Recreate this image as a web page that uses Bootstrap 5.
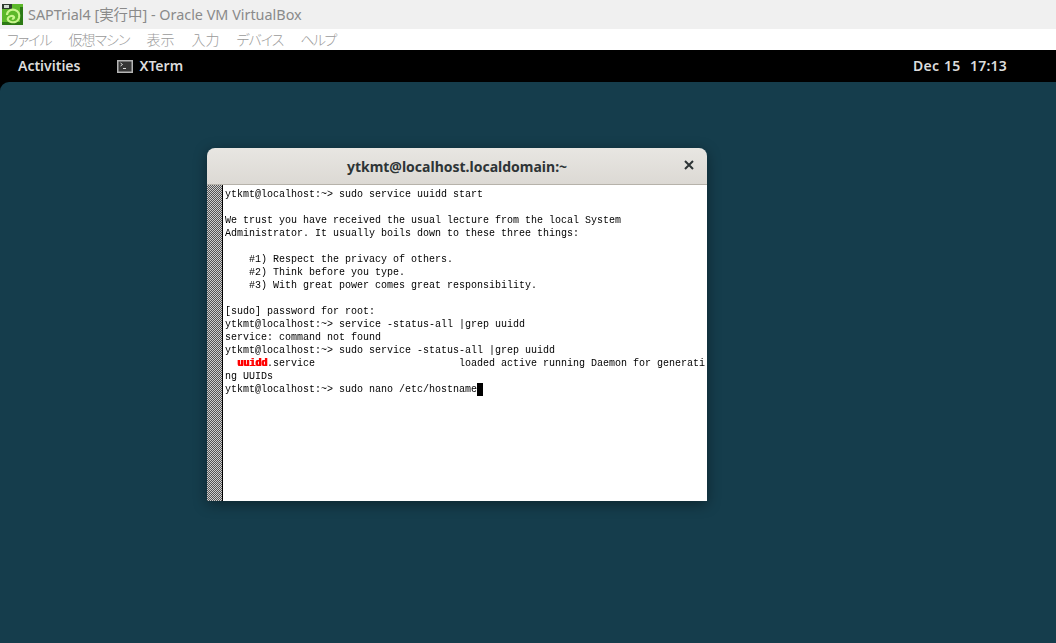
<!doctype html>
<html lang="ja"><head><meta charset="utf-8"><title>VirtualBox</title>
<link href="https://cdn.jsdelivr.net/npm/bootstrap@5.3.0/dist/css/bootstrap.min.css" rel="stylesheet">
<style>
html,body{height:643px;overflow:hidden;background:#000}
.vb-title{height:29px;background:#f0f0f0;color:#8a8a8a;font:14.4px/29px "Noto Sans","Noto Sans CJK JP",sans-serif;padding-left:2px;gap:5px}
.vb-menu{height:21px;background:#fff;color:#9a9a9a;font:300 14px/21px "Noto Sans CJK JP",sans-serif;font-feature-settings:"palt";padding-left:7px;gap:17px}
.vb-kana{letter-spacing:-1px}
.vb-kana-tight{letter-spacing:-1.6px}
.gn-bar{height:32px;background:#000;color:#dcdcdc;font:600 14px/30px "Noto Sans",sans-serif;padding:0 49px 0 18px}
.gn-app{margin-left:37px;gap:6px}
.gn-clock{letter-spacing:.2px;word-spacing:1px}
.desk{position:relative;height:561px;background:#153d4c;border-radius:9px 0 0 0;flex:none}
.desk-wrap{background:#000}
.term-win{position:absolute;left:207px;top:66px;width:500px;height:353px;border-radius:8px 8px 0 0;box-shadow:0 3px 14px rgba(0,0,0,.4);overflow:hidden}
.term-head{height:37px;flex:none;background:linear-gradient(#e8e6e2,#dcd9d4);border-bottom:1px solid #b6b2aa;position:relative;color:#2e3436;font:700 14px/37px "Noto Sans",sans-serif;text-align:center}
.term-close{position:absolute;right:13px;top:12px;display:block}
.term-body{flex:1;min-height:0;background:#fff}
.term-scroll{width:16px;flex:none;border-right:1px solid #000;background-color:#cfcfcf;background-image:conic-gradient(#555 25%,transparent 0 50%,#555 0 75%,transparent 0);background-size:2px 2px}
.term-text{padding:3px 0 0 2px;overflow:hidden;color:#000;font:10px/13px "Liberation Mono",monospace;flex:1;will-change:transform}
.term-line{height:13px;white-space:pre}
.term-hit{color:#f00;font-weight:700;text-shadow:1px 0 #f00}
.term-cur{display:inline-block;width:6px;height:13px;background:#000;vertical-align:top}
</style></head>
<body>
<div class="d-flex align-items-center vb-title">
<svg width="21" height="21" viewBox="0 0 21 21" aria-hidden="true"><rect width="21" height="21" fill="#5cb82a"/><rect x="18" y="3" width="3" height="18" fill="#2d7a14"/><rect y="18" width="21" height="3" fill="#2d7a14"/><rect width="10" height="5" fill="#2c3a2c"/><rect x="2" y="1" width="5" height="3" fill="#cfd8cf"/><path d="M5 11c0-4 4-6 8-5 3 1 5 4 4 8-1 3-4 5-8 4-2-.5-4-2-3-4 1-2 5-3 6-1 .5 1-1 2-2 1.500" fill="none" stroke="#c8f58c" stroke-width="2.200"/></svg>
<span>SAPTrial4 [実行中] - Oracle VM VirtualBox</span></div>
<div class="d-flex vb-menu"><span class="vb-kana">ファイル</span><span class="vb-kana">仮想マシン</span><span>表示</span><span>入力</span><span class="vb-kana">デバイス</span><span class="vb-kana-tight">ヘルプ</span></div>
<div class="d-flex align-items-center gn-bar">
<span>Activities</span>
<span class="d-flex align-items-center gn-app"><svg width="16" height="13" viewBox="0 0 16 13" aria-hidden="true"><rect x=".75" y=".75" width="14.500" height="11.500" fill="#363636" stroke="#b5b5b5" stroke-width="1.500"/><path d="M3.500 3l2 1.500-2 1.500" fill="none" stroke="#ddd"/><path d="M6 8.500h3" stroke="#ddd"/></svg>XTerm</span>
<span class="ms-auto gn-clock">Dec 15&nbsp; 17:13</span></div>
<div class="desk-wrap"><div class="desk">
<div class="term-win d-flex flex-column">
<div class="term-head">ytkmt@localhost.localdomain:~<svg class="term-close" width="10" height="10" viewBox="0 0 10 10" aria-hidden="true"><path d="M1 1l8 8M9 1l-8 8" stroke="#2e3436" stroke-width="2"/></svg></div>
<div class="term-body d-flex">
<div class="term-scroll"></div>
<div class="term-text">
<div class="term-line">ytkmt@localhost:~&gt; sudo service uuidd start</div>
<div class="term-line"></div>
<div class="term-line">We trust you have received the usual lecture from the local System</div>
<div class="term-line">Administrator. It usually boils down to these three things:</div>
<div class="term-line"></div>
<div class="term-line">    #1) Respect the privacy of others.</div>
<div class="term-line">    #2) Think before you type.</div>
<div class="term-line">    #3) With great power comes great responsibility.</div>
<div class="term-line"></div>
<div class="term-line">[sudo] password for root:</div>
<div class="term-line">ytkmt@localhost:~&gt; service -status-all |grep uuidd</div>
<div class="term-line">service: command not found</div>
<div class="term-line">ytkmt@localhost:~&gt; sudo service -status-all |grep uuidd</div>
<div class="term-line">  <span class="term-hit">uuidd</span>.service                        loaded active running Daemon for generati</div>
<div class="term-line">ng UUIDs</div>
<div class="term-line">ytkmt@localhost:~&gt; sudo nano /etc/hostname<span class="term-cur"></span></div>
</div>
</div></div>
</div></div>
<script src="https://cdn.jsdelivr.net/npm/bootstrap@5.3.0/dist/js/bootstrap.bundle.min.js"></script>
</body></html>
